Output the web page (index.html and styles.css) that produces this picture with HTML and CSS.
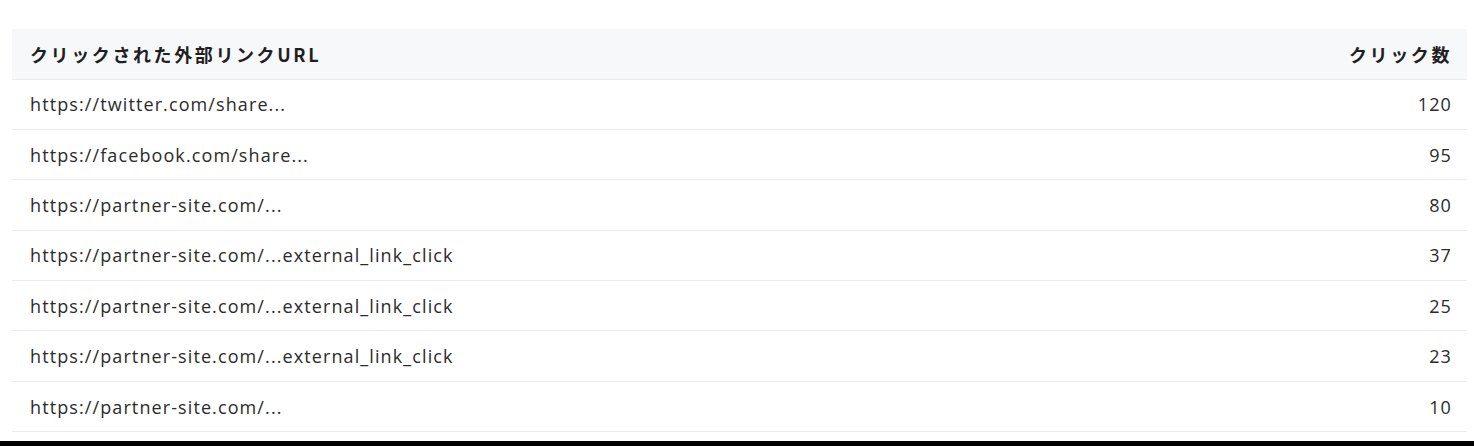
FILE: index.html
```html
<!DOCTYPE html>
<html lang="ja">
<head>
    <meta charset="UTF-8">
    <meta name="viewport" content="width=device-width, initial-scale=1.0">
    <title>外部リンククリック</title>
    <link rel="stylesheet" href="styles.css">
</head>
<body>
    <div class="panel">
        <table class="link-table">
            <thead>
                <tr>
                    <th>クリックされた外部リンクURL</th>
                    <th class="num">クリック数</th>
                </tr>
            </thead>
            <tbody>
                <tr><td>https://twitter.com/share...</td><td class="num">120</td></tr>
                <tr><td>https://facebook.com/share...</td><td class="num">95</td></tr>
                <tr><td>https://partner-site.com/...</td><td class="num">80</td></tr>
                <tr><td>https://partner-site.com/...external_link_click</td><td class="num">37</td></tr>
                <tr><td>https://partner-site.com/...external_link_click</td><td class="num">25</td></tr>
                <tr><td>https://partner-site.com/...external_link_click</td><td class="num">23</td></tr>
                <tr><td>https://partner-site.com/...</td><td class="num">10</td></tr>
            </tbody>
        </table>
    </div>
    <div class="bottom-bar"></div>
</body>
</html>
```

FILE: styles.css
```css
body {
    margin: 0;
    background-color: #fff;
    font-family: "Open Sans", "Noto Sans CJK JP", sans-serif;
    color: #2b2b2b;
}
.panel {
    padding: 29px 7px 0 12px;
    height: 441px;
    box-sizing: border-box;
}
.link-table {
    width: 100%;
    border-collapse: collapse;
    font-size: 18px;
}
.link-table th,
.link-table td {
    text-align: left;
    padding: 0 15px 0 18px;
    border-bottom: 1px solid #ececec;
    height: 50.4px;
    box-sizing: border-box;
}
.link-table td {
    letter-spacing: 1.1px;
}
.link-table th {
    background-color: #f6f8fa;
    color: #1f1f1f;
    font-family: "Noto Sans CJK JP", sans-serif;
    font-weight: bold;
    letter-spacing: 2.6px;
    height: 50px;
}
.link-table .num {
    text-align: right;
}
.bottom-bar {
    height: 5px;
    background-color: #000;
}
```
